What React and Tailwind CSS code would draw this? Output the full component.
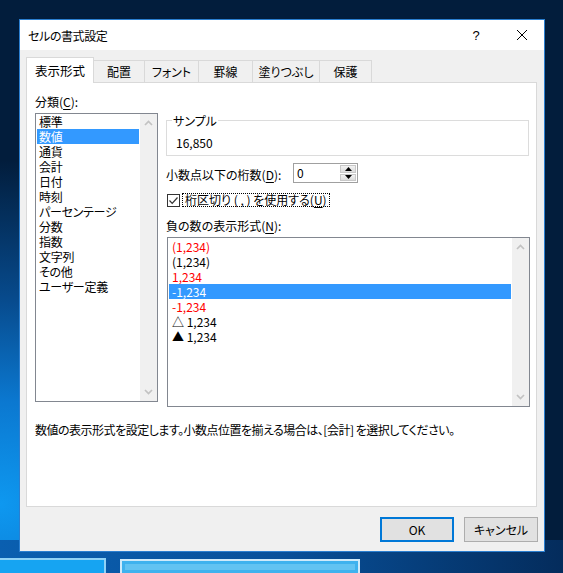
import React from "react";

const Chevron = ({ down }) => (
  <svg width="9" height="6" viewBox="0 0 9 6">
    <path
      d={down ? "M1 1 L4.5 4.5 L8 1" : "M1 5 L4.5 1.5 L8 5"}
      fill="none"
      stroke="#c2c2c2"
      strokeWidth="1.7"
    />
  </svg>
);

const ScrollBar = () => (
  <div className="w-[17px] bg-[#f0f0f0] flex flex-col justify-between items-center py-[6px]">
    <Chevron />
    <Chevron down />
  </div>
);

const U = ({ children }) => <span className="underline underline-offset-2">{children}</span>;

const categories = [
  "標準",
  "数値",
  "通貨",
  "会計",
  "日付",
  "時刻",
  "パーセンテージ",
  "分数",
  "指数",
  "文字列",
  "その他",
  "ユーザー定義",
];

const negatives = [
  { t: "(1,234)", c: "text-[#ff0000]" },
  { t: "(1,234)", c: "text-black" },
  { t: "1,234", c: "text-[#ff0000]" },
  { t: "-1,234", c: "text-white", sel: true },
  { t: "-1,234", c: "text-[#ff0000]" },
  { t: "△ 1,234", c: "text-black" },
  { t: "▲ 1,234", c: "text-black" },
];

const tabs = [
  { t: "配置", w: "w-[51px]" },
  { t: "フォント", w: "w-[54px]" },
  { t: "罫線", w: "w-[54px]" },
  { t: "塗りつぶし", w: "w-[67px]" },
  { t: "保護", w: "w-[52px]" },
];

export default function App() {
  return (
    <div className="relative w-[563px] h-[573px] overflow-hidden bg-[#021a35] bg-[radial-gradient(ellipse_75%_60%_at_0%_88%,#0e98f0_0%,#0b78d0_30%,#074a8c_60%,#021d3c_100%)] pt-[19px] pl-[19px] font-['Noto_Sans_CJK_JP','Noto_Sans',sans-serif] text-[12px] leading-[15px] text-black [font-feature-settings:'palt']">
      {/* bottom band & desktop windows */}
      <div className="absolute left-0 bottom-0 w-[563px] h-[33px] bg-[linear-gradient(90deg,#0a5fb0,#08509a_50%,#042c5c)]" />
      <div className="absolute left-0 bottom-0 w-[106px] h-[15px] border-t-2 border-r-2 border-[#8fd2f6] bg-[#16a4f2]" />
      <div className="absolute left-[120px] bottom-0 w-[240px] h-[14px] border-t-2 border-x-2 border-[#cfeafa] bg-[#3fb2ee] p-[3px]">
        <div className="w-full h-full bg-[#62c3f2]" />
      </div>

      {/* dialog */}
      <div className="relative w-[526px] h-[533px] border border-[#2b7fd0] bg-[#f0f0f0] flex flex-col">
        {/* title bar */}
        <div className="h-[30px] bg-white flex items-center pl-[8px]">
          <span className="flex-1 tracking-[-0.4px]">セルの書式設定</span>
          <span className="w-[12px] text-center mr-[34px] text-[13px] [font-feature-settings:normal] font-['Liberation_Sans',sans-serif]">?</span>
          <svg width="12" height="12" viewBox="0 0 12 12" className="mr-[16px]">
            <path d="M1 1 L11 11 M11 1 L1 11" stroke="#000" strokeWidth="1" />
          </svg>
        </div>

        {/* body */}
        <div className="flex-1 flex flex-col pl-[6px]">
          {/* tabs */}
          <div className="mt-[7px] h-[26px] -mb-px flex items-end relative z-10">
            <div className="w-[68px] h-[26px] bg-white border-x border-t border-[#d9d9d9] flex items-center justify-center pb-[1px] text-[12.5px]">
              表示形式
            </div>
            {tabs.map((tab) => (
              <div
                key={tab.t}
                className={`${tab.w} h-[22px] mb-px bg-[#f0f0f0] border-t border-r border-[#d9d9d9] flex items-center justify-center`}
              >
                {tab.t}
              </div>
            ))}
          </div>

          {/* panel */}
          <div className="w-[511px] h-[425px] bg-white border border-[#d9d9d9] pt-[11px] pl-[8px] flex flex-col">
            <div className="flex gap-[8px]">
              {/* left column */}
              <div className="flex flex-col">
                <div className="h-[15px]">
                  分類(<U>C</U>):
                </div>
                <div className="mt-[4px] w-[123px] h-[289px] border border-[#828790] bg-white flex">
                  <div className="flex-1 pl-[1px] pr-[1px] tracking-[-0.3px]">
                    {categories.map((c) => (
                      <div
                        key={c}
                        className={`h-[15px] pl-[2px] ${c === "数値" ? "bg-[#3399ff] text-white" : ""}`}
                      >
                        {c}
                      </div>
                    ))}
                  </div>
                  <ScrollBar />
                </div>
              </div>

              {/* right column */}
              <div className="flex flex-col">
                <fieldset className="mt-[19px] w-[363px] border border-[#dcdcdc] px-[9px] pb-[5px]">
                  <legend className="ml-[-4px] px-[1px] h-[15px]">サンプル</legend>
                  <div className="pt-[7px] h-[22px]">16,850</div>
                </fieldset>

                <div className="mt-[7px] h-[20px] flex items-center">
                  <div className="w-[127px] pt-[3px]">
                    小数点以下の桁数(<U>D</U>):
                  </div>
                  <div className="w-[65px] h-[20px] border border-[#a0a0a0] bg-white flex">
                    <div className="flex-1 pl-[3px] leading-[18px]">0</div>
                    <div className="w-[17px] flex flex-col gap-px p-px pl-0">
                      <div className="flex-1 bg-[linear-gradient(#f2f2f2,#dcdcdc)] border border-[#c8c8c8] flex items-center justify-center">
                        <svg width="7" height="4" viewBox="0 0 7 4">
                          <path d="M0 4 L3.5 0 L7 4 Z" fill="#000" />
                        </svg>
                      </div>
                      <div className="flex-1 bg-[linear-gradient(#f2f2f2,#dcdcdc)] border border-[#c8c8c8] flex items-center justify-center">
                        <svg width="7" height="4" viewBox="0 0 7 4">
                          <path d="M0 0 L3.5 4 L7 0 Z" fill="#000" />
                        </svg>
                      </div>
                    </div>
                  </div>
                </div>

                <div className="mt-[10px] h-[14px] flex items-center pl-[1px]">
                  <div className="w-[13px] h-[13px] border border-[#333333] bg-white flex items-center justify-center">
                    <svg width="11" height="11" viewBox="0 0 11 11">
                      <path d="M1.5 5.5 L4.2 8.3 L9.5 2.5" fill="none" stroke="#333" strokeWidth="1.2" />
                    </svg>
                  </div>
                  <div className="ml-[2px] h-[14px] border border-dotted border-black px-[2px] leading-[12px] flex items-center whitespace-pre">
                    桁区切り ( , ) を使用する(<U>U</U>)
                  </div>
                </div>

                <div className="mt-[11px] h-[15px]">
                  負の数の表示形式(<U>N</U>):
                </div>

                <div className="mt-[4px] ml-px w-[363px] h-[170px] border border-[#828790] bg-white flex">
                  <div className="flex-1 pl-[1px] pt-[1px] pr-px">
                    {negatives.map((n, i) => (
                      <div
                        key={i}
                        className={`h-[15px] pl-[3px] ${n.c} ${n.sel ? "bg-[#3399ff]" : ""}`}
                      >
                        {n.t}
                      </div>
                    ))}
                  </div>
                  <ScrollBar />
                </div>
              </div>
            </div>

            <div className="mt-[15px] tracking-[-0.5px]">
              数値の表示形式を設定します。小数点位置を揃える場合は、[会計] を選択してください。
            </div>
          </div>

          {/* buttons */}
          <div className="mt-[10px] flex justify-end gap-[10px] pr-[6px]">
            <div className="w-[74px] h-[25px] bg-[#e1e1e1] border-2 border-[#0078d7] flex items-center justify-center">
              OK
            </div>
            <div className="w-[74px] h-[25px] bg-[#e1e1e1] border border-[#adadad] flex items-center justify-center">
              キャンセル
            </div>
          </div>
        </div>
      </div>
    </div>
  );
}
